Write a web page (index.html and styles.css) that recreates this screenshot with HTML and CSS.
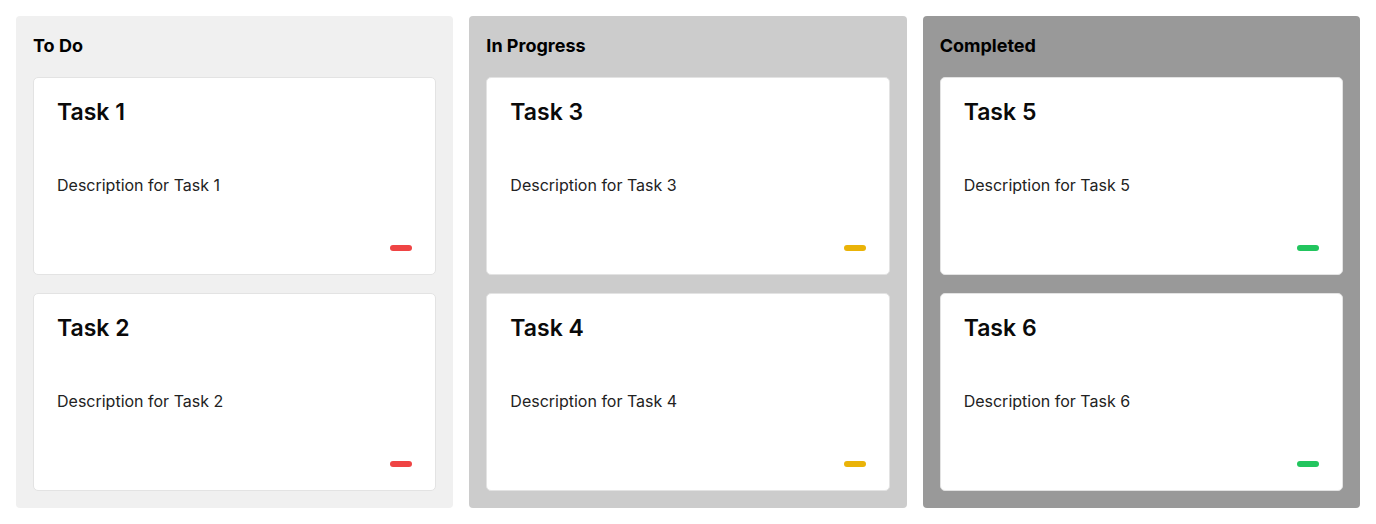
FILE: index.html
```html
<!DOCTYPE html>
<html>
<head>
<meta charset="utf-8">
<link rel="stylesheet" href="styles.css">
</head>
<body>
<div class="board">
  <section class="column todo">
    <h3 class="column-title">To Do</h3>
    <div class="card">
      <h2 class="card-title">Task 1</h2>
      <p class="card-desc">Description for Task 1</p>
      <div class="card-foot"><span class="pill red"></span></div>
    </div>
    <div class="card">
      <h2 class="card-title">Task 2</h2>
      <p class="card-desc">Description for Task 2</p>
      <div class="card-foot"><span class="pill red"></span></div>
    </div>
  </section>
  <section class="column progress">
    <h3 class="column-title">In Progress</h3>
    <div class="card">
      <h2 class="card-title">Task 3</h2>
      <p class="card-desc">Description for Task 3</p>
      <div class="card-foot"><span class="pill yellow"></span></div>
    </div>
    <div class="card">
      <h2 class="card-title">Task 4</h2>
      <p class="card-desc">Description for Task 4</p>
      <div class="card-foot"><span class="pill yellow"></span></div>
    </div>
  </section>
  <section class="column done">
    <h3 class="column-title">Completed</h3>
    <div class="card">
      <h2 class="card-title">Task 5</h2>
      <p class="card-desc">Description for Task 5</p>
      <div class="card-foot"><span class="pill green"></span></div>
    </div>
    <div class="card">
      <h2 class="card-title">Task 6</h2>
      <p class="card-desc">Description for Task 6</p>
      <div class="card-foot"><span class="pill green"></span></div>
    </div>
  </section>
</div>
</body>
</html>
```
FILE: styles.css
```css
* { box-sizing: border-box; }
html, body { margin: 0; padding: 0; background: #ffffff; }
body { font-family: Inter, "Noto Sans", sans-serif; color: #111; }
.board {
  display: grid;
  grid-template-columns: repeat(3, 1fr);
  gap: 16px;
  padding: 16px;
}
.column {
  border-radius: 4px;
  padding: 18px 17px 17px;
  display: flex;
  flex-direction: column;
  gap: 18px;
}
.todo { background: #f0f0f0; }
.progress { background: #cccccc; }
.done { background: #999999; }
.column-title {
  margin: 0 0 1px;
  font-size: 18px;
  font-weight: 700;
  line-height: 24px;
  color: #000;
}
.card {
  background: #fff;
  border: 1px solid #e3e3e3;
  border-radius: 5px;
  padding: 20px 23px 23px;
}
.card-title {
  margin: 0 0 46px;
  font-size: 23px;
  font-weight: 600;
  line-height: 29px;
  color: #0a0a0a;
}
.card-desc {
  margin: 0 0 48px;
  font-size: 16px;
  line-height: 24px;
  color: #222;
}
.card-foot { display: flex; justify-content: flex-end; }
.pill { width: 22px; height: 6px; border-radius: 3px; }
.red { background: #ef4444; }
.yellow { background: #eab308; }
.green { background: #22c55e; }
```
